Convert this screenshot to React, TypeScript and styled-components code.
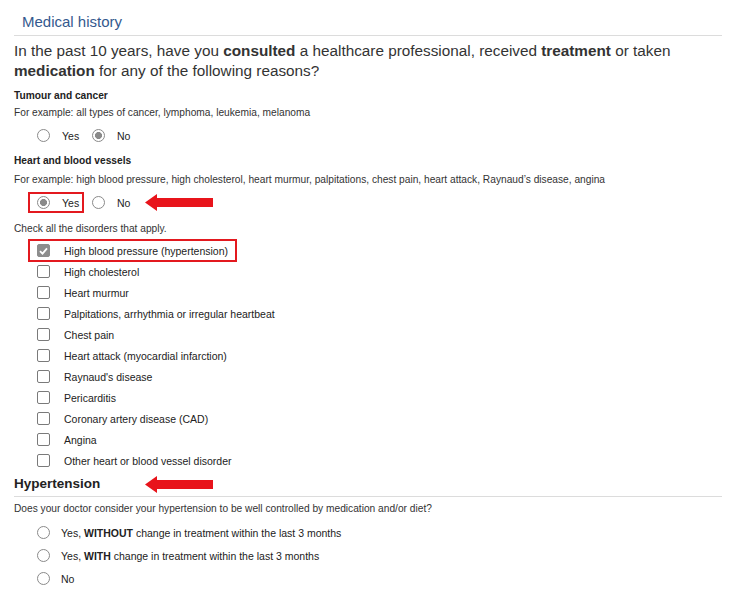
import styled, { createGlobalStyle } from 'styled-components'

const GlobalStyle = createGlobalStyle`
  body {
    margin: 0;
    background: #fff;
    font-family: 'Liberation Sans', Arial, sans-serif;
    color: #333;
  }
`

const Page = styled.div`
  width: 708px;
  padding: 12px 10px 0 14px;
`

const SectionTitle = styled.h2`
  margin: 0;
  padding: 0 0 3px 8px;
  font-size: 15px;
  line-height: 20px;
  font-weight: normal;
  color: #34598e;
  border-bottom: 1px solid #dcdcdc;
`

const Question = styled.p`
  margin: 5px 0 0;
  font-size: 15.3px;
  line-height: 20px;
  color: #333;
`

const GroupLabel = styled.div<{ $gap?: number }>`
  margin-top: ${(p) => p.$gap ?? 8}px;
  font-size: 10.2px;
  line-height: 14px;
  font-weight: bold;
  color: #222;
`

const Hint = styled.div<{ $gap?: number }>`
  margin-top: ${(p) => p.$gap ?? 4}px;
  font-size: 10.2px;
  line-height: 14px;
  color: #333;
`

const InlineRow = styled.div<{ $top?: number }>`
  display: flex;
  align-items: center;
  height: 21px;
  margin-top: ${(p) => p.$top ?? 5}px;
  padding-left: 23px;
`

const Option = styled.label<{ $boxed?: boolean }>`
  display: flex;
  align-items: center;
  gap: 12px;
  width: 45px;
  height: 21px;
  margin-right: 10px;
  font-size: 10.5px;
  color: #222;
  box-sizing: border-box;
  ${(p) =>
    p.$boxed &&
    `
    width: 56px;
    border: 2px solid #e3191f;
    margin-left: -9px;
    padding-left: 7px;
    margin-right: 8px;
  `}
`

const Radio = styled.span<{ $checked?: boolean }>`
  width: 13px;
  height: 13px;
  border-radius: 50%;
  border: 1px solid #8a8a8a;
  box-sizing: border-box;
  flex: none;
  background: ${(p) =>
    p.$checked ? 'radial-gradient(circle, #8a8a8a 0 3.2px, #fff 3.8px)' : '#fff'};
`

const CheckList = styled.div`
  margin-top: 4px;
  display: flex;
  flex-direction: column;
`

const CheckRow = styled.label<{ $boxed?: boolean }>`
  display: flex;
  align-items: center;
  height: 21px;
  padding-left: 23px;
  gap: 14px;
  font-size: 10.5px;
  color: #222;
  box-sizing: border-box;
  ${(p) =>
    p.$boxed &&
    `
    width: 209px;
    height: 23px;
    border: 2px solid #e3191f;
    margin: -1px 0 -1px 14px;
    padding-left: 7px;
  `}
`

const Checkbox = styled.span<{ $checked?: boolean }>`
  width: 13px;
  height: 13px;
  border-radius: 2px;
  box-sizing: border-box;
  flex: none;
  display: flex;
  align-items: center;
  justify-content: center;
  border: 1px solid ${(p) => (p.$checked ? '#8d8d8d' : '#7a7a7a')};
  background: ${(p) => (p.$checked ? '#8d8d8d' : '#fff')};
`

const SubTitleRow = styled.div`
  display: flex;
  align-items: center;
  margin-top: 4px;
  padding-bottom: 3px;
  border-bottom: 1px solid #dcdcdc;
`

const SubTitle = styled.h3`
  margin: 0;
  font-size: 13.5px;
  line-height: 18px;
  font-weight: bold;
  color: #222;
`

const StackedOptions = styled.div`
  margin-top: 6px;
  display: flex;
  flex-direction: column;
  gap: 2px;
`

const StackedOption = styled.label`
  display: flex;
  align-items: center;
  gap: 11px;
  height: 21px;
  padding-left: 23px;
  font-size: 10.5px;
  color: #222;
`

const ArrowWrap = styled.span<{ $left: number }>`
  display: flex;
  margin-left: ${(p) => p.$left}px;
`

const Arrow = ({ left }: { left: number }) => (
  <ArrowWrap $left={left}>
    <svg width="68" height="17" viewBox="0 0 68 17">
      <path d="M0 8.5 L12 0 L12 4 L68 4 L68 13 L12 13 L12 17 Z" fill="#e8141b" />
    </svg>
  </ArrowWrap>
)

const Tick = () => (
  <svg width="9" height="8" viewBox="0 0 9 8">
    <path d="M1 4.2 L3.5 6.6 L8 1.3" stroke="#fff" strokeWidth="1.8" fill="none" />
  </svg>
)

const disorders = [
  'High blood pressure (hypertension)',
  'High cholesterol',
  'Heart murmur',
  'Palpitations, arrhythmia or irregular heartbeat',
  'Chest pain',
  'Heart attack (myocardial infarction)',
  "Raynaud's disease",
  'Pericarditis',
  'Coronary artery disease (CAD)',
  'Angina',
  'Other heart or blood vessel disorder',
]

export default function App() {
  return (
    <>
      <GlobalStyle />
      <Page>
        <SectionTitle>Medical history</SectionTitle>
        <Question>
          In the past 10 years, have you <b>consulted</b> a healthcare professional, received{' '}
          <b>treatment</b> or taken <b>medication</b> for any of the following reasons?
        </Question>

        <GroupLabel>Tumour and cancer</GroupLabel>
        <Hint $gap={3}>For example: all types of cancer, lymphoma, leukemia, melanoma</Hint>
        <InlineRow>
          <Option>
            <Radio />
            Yes
          </Option>
          <Option>
            <Radio $checked />
            No
          </Option>
        </InlineRow>

        <GroupLabel $gap={8}>Heart and blood vessels</GroupLabel>
        <Hint $gap={5}>
          For example: high blood pressure, high cholesterol, heart murmur, palpitations, chest pain,
          heart attack, Raynaud’s disease, angina
        </Hint>
        <InlineRow $top={5}>
          <Option $boxed>
            <Radio $checked />
            Yes
          </Option>
          <Option>
            <Radio />
            No
          </Option>
          <Arrow left={-2} />
        </InlineRow>

        <Hint $gap={9}>Check all the disorders that apply.</Hint>
        <CheckList>
          {disorders.map((d, i) => (
            <CheckRow key={d} $boxed={i === 0}>
              <Checkbox $checked={i === 0}>{i === 0 && <Tick />}</Checkbox>
              {d}
            </CheckRow>
          ))}
        </CheckList>

        <SubTitleRow>
          <SubTitle>Hypertension</SubTitle>
          <Arrow left={45} />
        </SubTitleRow>
        <Hint $gap={5}>
          Does your doctor consider your hypertension to be well controlled by medication and/or diet?
        </Hint>
        <StackedOptions>
          <StackedOption>
            <Radio />
            <span>
              Yes, <b>WITHOUT</b> change in treatment within the last 3 months
            </span>
          </StackedOption>
          <StackedOption>
            <Radio />
            <span>
              Yes, <b>WITH</b> change in treatment within the last 3 months
            </span>
          </StackedOption>
          <StackedOption>
            <Radio />
            No
          </StackedOption>
        </StackedOptions>
      </Page>
    </>
  )
}
